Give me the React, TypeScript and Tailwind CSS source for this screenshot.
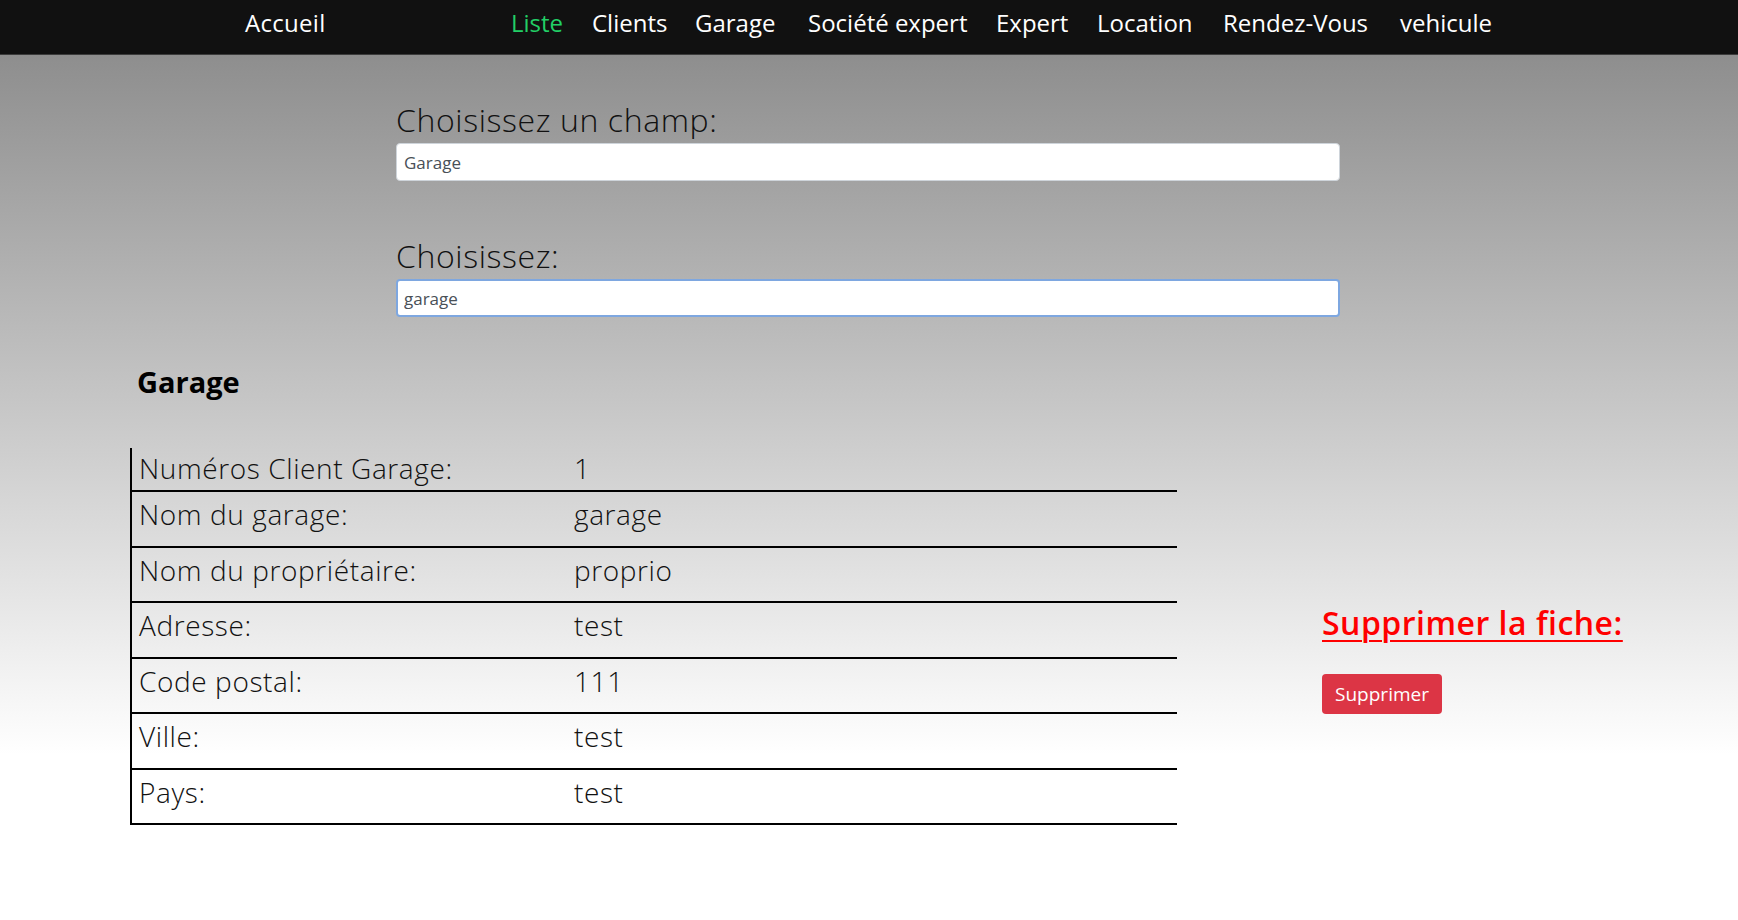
import React from "react";

const links: { label: string; w: string; active?: boolean }[] = [
  { label: "Liste", w: "w-[81px]", active: true },
  { label: "Clients", w: "w-[103px]" },
  { label: "Garage", w: "w-[113px]" },
  { label: "Société expert", w: "w-[188px]" },
  { label: "Expert", w: "w-[101px]" },
  { label: "Location", w: "w-[126px]" },
  { label: "Rendez-Vous", w: "w-[177px]" },
  { label: "vehicule", w: "w-[120px]" },
];

const rows: { label: string; value: string; h: string; pt: string }[] = [
  { label: "Numéros Client Garage:", value: "1", h: "h-[44px]", pt: "pt-[3px]" },
  { label: "Nom du garage:", value: "garage", h: "h-[56px]", pt: "pt-[5px]" },
  { label: "Nom du propriétaire:", value: "proprio", h: "h-[55px]", pt: "pt-[5px]" },
  { label: "Adresse:", value: "test", h: "h-[56px]", pt: "pt-[5px]" },
  { label: "Code postal:", value: "111", h: "h-[55px]", pt: "pt-[5px]" },
  { label: "Ville:", value: "test", h: "h-[56px]", pt: "pt-[5px]" },
  { label: "Pays:", value: "test", h: "h-[55px]", pt: "pt-[5px]" },
];

function Navbar() {
  return (
    <nav className="h-[55px] bg-[#111111] border-b border-[#3c3c3c]">
      <div className="flex pt-[7px] text-[24px] leading-[32px] text-white">
        <a className="ml-[245px] w-[266px] tracking-[0.3px]">Accueil</a>
        {links.map((l) => (
          <a key={l.label} className={`${l.w} whitespace-nowrap ${l.active ? "text-[#22cf66]" : "text-white"}`}>
            {l.label}
          </a>
        ))}
      </div>
    </nav>
  );
}

export default function App() {
  return (
    <div className="font-['Open_Sans','Liberation_Sans',sans-serif] text-black">
      <Navbar />
      <main className="min-h-[865px] bg-[linear-gradient(to_bottom,#8e8e8e_0px,#ffffff_700px)] pb-10">
        <div className="ml-[396px] w-[944px] pt-[46px]">
          <div className="text-[32px] leading-[38px] font-light tracking-[0.6px] text-[#111]">Choisissez un champ:</div>
          <input
            readOnly
            value="Garage"
            className="mt-[4px] block w-full h-[38px] bg-white border border-[#ced4da] rounded-[4px] pl-[7px] text-[17px] text-[#495057] font-['Open_Sans',sans-serif] outline-none"
          />
          <div className="mt-[56px] text-[32px] leading-[38px] font-light tracking-[0.6px] text-[#111]">Choisissez:</div>
          <input
            readOnly
            value="garage"
            className="mt-[4px] block w-full h-[38px] bg-white border-2 border-[#7ea7e0] rounded-[4px] pl-[6px] text-[17px] text-[#495057] font-['Open_Sans',sans-serif] outline-none"
          />
        </div>

        <h2 className="ml-[137px] mt-[48px] text-[29px] leading-[34px] font-bold">Garage</h2>

        <div className="flex mt-[49px]">
          <div className="ml-[130px] w-[1047px] border-l-2 border-black">
            {rows.map((r) => (
              <div
                key={r.label}
                className={`${r.h} ${r.pt} border-b-2 border-black flex text-[28px] leading-[34px] font-light tracking-[0.6px] text-[#111]`}
              >
                <div className="w-[442px] pl-[7px] whitespace-nowrap">{r.label}</div>
                <div>{r.value}</div>
              </div>
            ))}
          </div>

          <div className="ml-[145px] pt-[156px]">
            <h2 className="text-[32px] leading-[38px] font-semibold tracking-[0.5px] text-[#ff0000] underline decoration-2 underline-offset-[5px] whitespace-nowrap">
              Supprimer la fiche:
            </h2>
            <button className="mt-[32px] w-[120px] h-[40px] rounded-[4px] bg-[#dc3545] text-white text-[19px] font-['Open_Sans',sans-serif]">
              Supprimer
            </button>
          </div>
        </div>
      </main>
    </div>
  );
}
